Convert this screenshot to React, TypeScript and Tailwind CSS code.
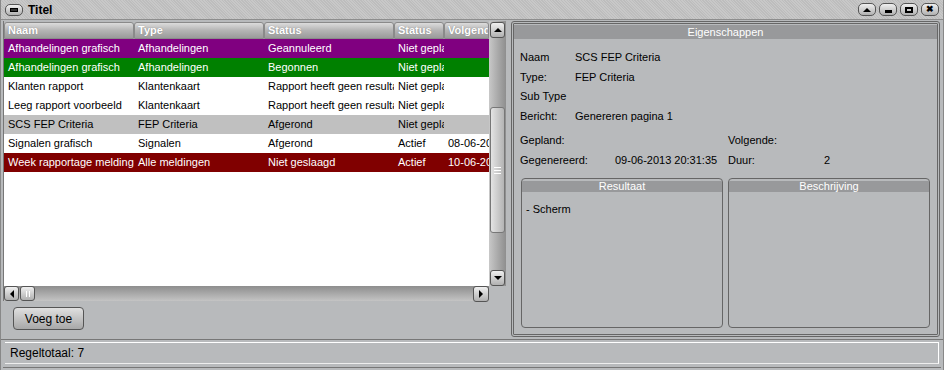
import React from "react";

type Row = { naam: string; type: string; status: string; plan: string; volgende: string; bg: string; fg: string };

const rows: Row[] = [
  { naam: "Afhandelingen grafisch", type: "Afhandelingen", status: "Geannuleerd", plan: "Niet gepland", volgende: "", bg: "bg-[#800080]", fg: "text-white" },
  { naam: "Afhandelingen grafisch", type: "Afhandelingen", status: "Begonnen", plan: "Niet gepland", volgende: "", bg: "bg-[#008000]", fg: "text-white" },
  { naam: "Klanten rapport", type: "Klantenkaart", status: "Rapport heeft geen resultaat", plan: "Niet gepland", volgende: "", bg: "bg-white", fg: "text-black" },
  { naam: "Leeg rapport voorbeeld", type: "Klantenkaart", status: "Rapport heeft geen resultaat", plan: "Niet gepland", volgende: "", bg: "bg-white", fg: "text-black" },
  { naam: "SCS FEP Criteria", type: "FEP Criteria", status: "Afgerond", plan: "Niet gepland", volgende: "", bg: "bg-[#c0c0c0]", fg: "text-black" },
  { naam: "Signalen grafisch", type: "Signalen", status: "Afgerond", plan: "Actief", volgende: "08-06-2013", bg: "bg-white", fg: "text-black" },
  { naam: "Week rapportage meldingen", type: "Alle meldingen", status: "Niet geslaagd", plan: "Actief", volgende: "10-06-2013", bg: "bg-[#800000]", fg: "text-white" },
];

const cols = ["w-[130px]", "w-[130px]", "w-[130px]", "w-[50px]", "w-[45px]"];

function HeadCell({ label, w }: { label: string; w: string }) {
  return (
    <div className={`${w} shrink-0 h-[17px] rounded-t-[3px] border border-[#8a8a8a] bg-gradient-to-b from-[#dcdcdc] via-[#b4b4b4] to-[#9a9a9a] px-[3px] text-[11px] leading-[15px] font-bold text-white overflow-hidden whitespace-nowrap [text-shadow:0_0_1px_#777]`}>
      {label}
    </div>
  );
}

function SmallBtn({ children, className = "" }: { children: React.ReactNode; className?: string }) {
  return (
    <div className={`flex items-center justify-center rounded-[3px] border border-[#555] bg-gradient-to-b from-[#f0f0f0] to-[#b0b0b0] ${className}`}>
      {children}
    </div>
  );
}

function GroupBox({ title, children }: { title: string; children?: React.ReactNode }) {
  return (
    <div className="flex-1 flex flex-col rounded-[4px] border border-[#666] overflow-hidden">
      <div className="mt-[2px] h-[11px] bg-[#98999b] text-center text-white text-[11px] leading-[11px]">{title}</div>
      <div className="flex-1 px-[4px] pt-[9px] text-[11px] text-black">{children}</div>
    </div>
  );
}

export default function App() {
  return (
    <div className="w-[944px] h-[370px] overflow-hidden bg-[#b8babc] font-['Liberation_Sans',Arial,sans-serif] text-[11px] text-black flex flex-col border-l border-r border-[#888]">
      {/* title bar */}
      <div className="h-[20px] shrink-0 flex items-center px-[4px] bg-[#c4c4c4] bg-[repeating-linear-gradient(45deg,#c8c8c8_0px,#c8c8c8_1px,#bdbdbd_1px,#bdbdbd_2px)] border-b border-[#8d8d8d]">
        <SmallBtn className="w-[18px] h-[12px] rounded-[5px]">
          <div className="w-[8px] h-[4px] border border-black bg-[#333]" />
        </SmallBtn>
        <span className="ml-[5px] text-[12px] font-bold text-black">Titel</span>
        <div className="ml-auto flex gap-[3px]">
          {["up", "min", "max", "close"].map((k) => (
            <SmallBtn key={k} className="w-[18px] h-[13px] rounded-[5px]">
              {k === "up" && <div className="w-0 h-0 border-l-[4px] border-r-[4px] border-b-[4px] border-l-transparent border-r-transparent border-b-black" />}
              {k === "min" && <div className="w-[7px] h-[3px] mt-[3px] bg-black" />}
              {k === "max" && <div className="w-[8px] h-[6px] border-[2px] border-black" />}
              {k === "close" && <span className="text-[9px] leading-none font-bold">✖</span>}
            </SmallBtn>
          ))}
        </div>
      </div>

      {/* body */}
      <div className="h-[320px] shrink-0 flex pt-[1px] border-b border-[#777]">
        {/* left */}
        <div className="w-[506px] shrink-0 flex flex-col pl-[2px]">
          <div className="flex h-[265px] border-l border-[#777]">
            <div className="w-[485px] flex flex-col">
              <div className="flex pt-[1px] bg-[#b8babc]">
                {["Naam", "Type", "Status", "Status", "Volgende"].map((l, i) => (
                  <HeadCell key={i} label={l} w={cols[i]} />
                ))}
              </div>
              <div className="flex-1 bg-white">
                {rows.map((r, i) => (
                  <div key={i} className={`flex h-[19px] items-center ${r.bg} ${r.fg}`}>
                    {[r.naam, r.type, r.status, r.plan, r.volgende].map((c, j) => (
                      <div key={j} className={`${cols[j]} shrink-0 pl-[4px] overflow-hidden whitespace-nowrap`}>{c}</div>
                    ))}
                  </div>
                ))}
              </div>
            </div>
            {/* vertical scrollbar */}
            <div className="w-[17px] flex flex-col bg-gradient-to-r from-[#c8c8c8] to-[#8e8e8e]">
              <SmallBtn className="h-[16px] mt-[1px] mx-[1px] shrink-0">
                <div className="w-0 h-0 border-l-[4px] border-r-[4px] border-b-[4px] border-l-transparent border-r-transparent border-b-black" />
              </SmallBtn>
              <div className="flex-1 flex flex-col pt-[69px] pb-[37px]">
                <div className="flex-1 mx-[1px] rounded-[3px] border border-[#777] bg-gradient-to-r from-[#e4e4e4] to-[#b4b4b4] flex items-center justify-center">
                  <div className="flex flex-col gap-[2px]">
                    <div className="w-[7px] h-px bg-white" />
                    <div className="w-[7px] h-px bg-white" />
                    <div className="w-[7px] h-px bg-white" />
                  </div>
                </div>
              </div>
              <SmallBtn className="h-[16px] mx-[1px] shrink-0">
                <div className="w-0 h-0 border-l-[4px] border-r-[4px] border-t-[4px] border-l-transparent border-r-transparent border-t-black" />
              </SmallBtn>
            </div>
          </div>
          {/* horizontal scrollbar */}
          <div className="flex h-[15px] w-[486px] bg-gradient-to-b from-[#8e8e8e] to-[#c4c4c4] border-l border-[#777]">
            <SmallBtn className="w-[15px] h-[15px]">
              <div className="w-0 h-0 border-t-[4px] border-b-[4px] border-r-[4px] border-t-transparent border-b-transparent border-r-black" />
            </SmallBtn>
            <SmallBtn className="w-[15px] h-[15px] ml-px">
              <div className="flex gap-[2px]"><div className="w-px h-[6px] bg-white" /><div className="w-px h-[6px] bg-white" /></div>
            </SmallBtn>
            <div className="flex-1" />
            <SmallBtn className="w-[16px] h-[16px]">
              <div className="w-0 h-0 border-t-[4px] border-b-[4px] border-l-[4px] border-t-transparent border-b-transparent border-l-black" />
            </SmallBtn>
          </div>
          <div className="flex pl-[10px] pt-[6px]">
            <div className="w-[71px] h-[23px] rounded-[4px] border border-[#555] bg-gradient-to-b from-[#e0e0e0] to-[#a8a8a8] flex items-center justify-center text-[12px]">
              Voeg toe
            </div>
          </div>
        </div>

        {/* right */}
        <div className="flex-1 ml-[4px] mr-[3px] mb-[2px] border-[3px] border-double border-[#666] rounded-[3px] flex flex-col">
          <div className="h-[14px] mt-[1px] bg-[#98999b] text-center text-white text-[11px] leading-[14px]">Eigenschappen</div>
          <div className="grid grid-cols-[55px_1fr] gap-y-[6.5px] px-[6px] pt-[12px] leading-[13px]">
            <span>Naam</span><span>SCS FEP Criteria</span>
            <span>Type:</span><span>FEP Criteria</span>
            <span>Sub Type</span><span className="h-[13px]"></span>
            <span>Bericht:</span><span>Genereren pagina 1</span>
          </div>
          <div className="flex px-[6px] pt-[11px] leading-[13px]">
            <div className="w-[208px] grid grid-cols-[95px_1fr] gap-y-[7px]">
              <span>Gepland:</span><span></span>
              <span>Gegenereerd:</span><span>09-06-2013 20:31:35</span>
            </div>
            <div className="grid grid-cols-[96px_1fr] gap-y-[7px]">
              <span>Volgende:</span><span></span>
              <span>Duur:</span><span>2</span>
            </div>
          </div>
          <div className="flex-1 flex gap-[5px] px-[7px] pt-[11px] pb-[6px]">
            <GroupBox title="Resultaat">- Scherm</GroupBox>
            <GroupBox title="Beschrijving" />
          </div>
        </div>
      </div>

      {/* status bar */}
      <div className="flex-1 flex flex-col">
        <div className="mx-[4px] mt-[2px] h-[22px] border-t border-r border-white border-b border-b-[#eee] flex items-center pl-[5px] text-[12px]">
          Regeltotaal: 7
        </div>
        <div className="mt-auto mb-[2px] mx-[2px] border-t border-[#777]" />
      </div>
    </div>
  );
}
